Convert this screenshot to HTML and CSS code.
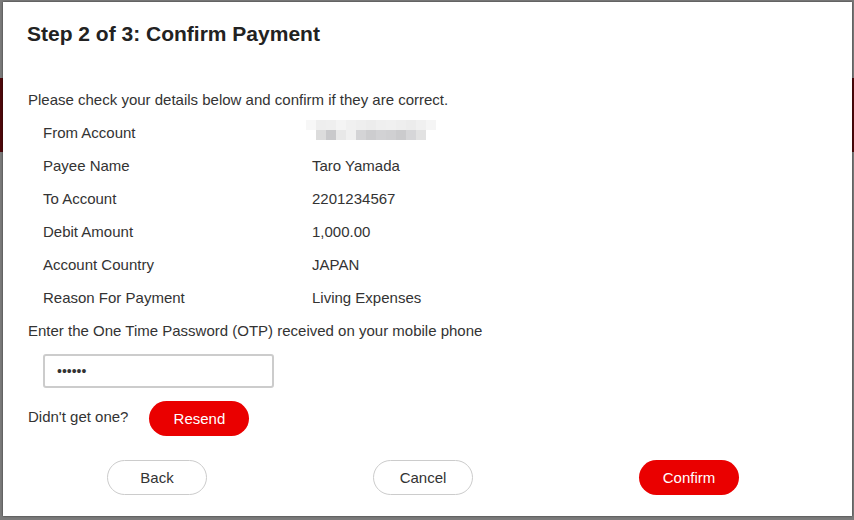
FILE: index.html
```html
<!DOCTYPE html>
<html lang="en">

<head>
    <meta charset="UTF-8">
    <meta name="viewport" content="width=device-width, initial-scale=1.0">
    <title>Confirm Payment</title>

    <link rel="stylesheet" href="styles.css">

</head>

<body>
    <!-- Dialogo de confirmacion sobre la pagina -->
    <div class="modal">
        <h1 class="modal-title">Step 2 of 3: Confirm Payment</h1>

        <p class="intro">Please check your details below and confirm if they are correct.</p>

        <!-- Detalles del pago -->
        <div class="details">
            <div class="label">From Account</div>
            <div class="value">
                <svg class="masked" width="130" height="20" viewBox="0 0 130 20">
                    <rect x="0" y="0" width="10" height="10" fill="#f7f7f7"/>
                    <rect x="10" y="0" width="10" height="10" fill="#eeeeee"/>
                    <rect x="20" y="0" width="10" height="10" fill="#efefef"/>
                    <rect x="30" y="0" width="10" height="10" fill="#f4f4f4"/>
                    <rect x="40" y="0" width="10" height="10" fill="#f0f0f0"/>
                    <rect x="50" y="0" width="10" height="10" fill="#eeeeee"/>
                    <rect x="60" y="0" width="10" height="10" fill="#ececec"/>
                    <rect x="70" y="0" width="10" height="10" fill="#efefef"/>
                    <rect x="80" y="0" width="10" height="10" fill="#f0f0f0"/>
                    <rect x="90" y="0" width="10" height="10" fill="#eeeeee"/>
                    <rect x="100" y="0" width="10" height="10" fill="#ececec"/>
                    <rect x="110" y="0" width="10" height="10" fill="#f0f0f0"/>
                    <rect x="120" y="0" width="10" height="10" fill="#f5f5f5"/>
                    <rect x="10" y="10" width="10" height="10" fill="#dcdcdc"/>
                    <rect x="20" y="10" width="10" height="10" fill="#c9c9cb"/>
                    <rect x="30" y="10" width="10" height="10" fill="#e8e8e8"/>
                    <rect x="40" y="10" width="10" height="10" fill="#f0f0f0"/>
                    <rect x="50" y="10" width="10" height="10" fill="#d4d4d6"/>
                    <rect x="60" y="10" width="10" height="10" fill="#cdcdcf"/>
                    <rect x="70" y="10" width="10" height="10" fill="#d2d2d4"/>
                    <rect x="80" y="10" width="10" height="10" fill="#d0d0d2"/>
                    <rect x="90" y="10" width="10" height="10" fill="#cbcbcd"/>
                    <rect x="100" y="10" width="10" height="10" fill="#d6d6d8"/>
                    <rect x="110" y="10" width="10" height="10" fill="#e2e2e2"/>
                </svg>
            </div>

            <div class="label">Payee Name</div>
            <div class="value">Taro Yamada</div>

            <div class="label">To Account</div>
            <div class="value">2201234567</div>

            <div class="label">Debit Amount</div>
            <div class="value">1,000.00</div>

            <div class="label">Account Country</div>
            <div class="value">JAPAN</div>

            <div class="label">Reason For Payment</div>
            <div class="value">Living Expenses</div>
        </div>

        <!-- Codigo OTP -->
        <p class="otp-label">Enter the One Time Password (OTP) received on your mobile phone</p>
        <input class="otp-input" type="password" value="123456">

        <div class="resend-row">
            <span>Didn't get one?</span>
            <button class="btn btn-primary">Resend</button>
        </div>

        <!-- Acciones -->
        <div class="actions">
            <button class="btn btn-outline">Back</button>
            <button class="btn btn-outline">Cancel</button>
            <button class="btn btn-primary">Confirm</button>
        </div>
    </div>
</body>

</html>
```

FILE: styles.css
```css
body {
    margin: 0;
    height: 520px;
    overflow: hidden;
    font-family: "Liberation Sans", Arial, sans-serif;
    color: #333333;
    background: linear-gradient(to bottom, #7b7b7b 78px, #4f080b 78px, #4f080b 152px, #7b7b7b 152px);
}

.modal {
    box-sizing: border-box;
    width: 849px;
    height: 514px;
    margin: 2px 0 0 3px;
    padding: 20px 24px 0 24px;
    background-color: #fff;
    box-shadow: 0px 0px 2px rgba(0, 0, 0, 0.6);
}

.modal-title {
    margin: 0;
    font-size: 21px;
    line-height: 24px;
    font-weight: bold;
    color: #222222;
}

.intro {
    margin: 44px 0 0 1px;
    font-size: 15px;
    line-height: 20px;
}

.details {
    display: grid;
    grid-template-columns: 269px 1fr;
    grid-auto-rows: 33px;
    margin-top: 6px;
    padding-left: 16px;
    font-size: 15px;
}

.label,
.value {
    display: flex;
    align-items: center;
}

.masked {
    display: block;
    margin: -6px 0 0 -6px;
}

.otp-label {
    margin: 7px 0 0 1px;
    font-size: 15px;
    line-height: 20px;
}

.otp-input {
    display: block;
    box-sizing: border-box;
    width: 231px;
    height: 34px;
    margin: 13px 0 0 16px;
    padding: 0 12px;
    border: 2px solid #cccccc;
    border-radius: 3px;
    font-family: "Liberation Sans", Arial, sans-serif;
    font-size: 14px;
    color: #333333;
    outline: none;
}

.resend-row {
    display: flex;
    align-items: center;
    gap: 21px;
    margin: 13px 0 0 1px;
    font-size: 15px;
}

.resend-row span {
    margin-top: -4px;
}

.actions {
    display: grid;
    grid-template-columns: repeat(3, 1fr);
    justify-items: center;
    width: 798px;
    margin: 24px 0 0 -3px;
}

.btn {
    box-sizing: border-box;
    width: 100px;
    height: 35px;
    border-radius: 18px;
    font-family: "Liberation Sans", Arial, sans-serif;
    font-size: 15px;
    cursor: pointer;
}

.btn-primary {
    background-color: #ea0000;
    color: #fff;
    border: none;
}

.btn-outline {
    background-color: #fff;
    color: #333333;
    border: 1px solid #cccccc;
}
```
